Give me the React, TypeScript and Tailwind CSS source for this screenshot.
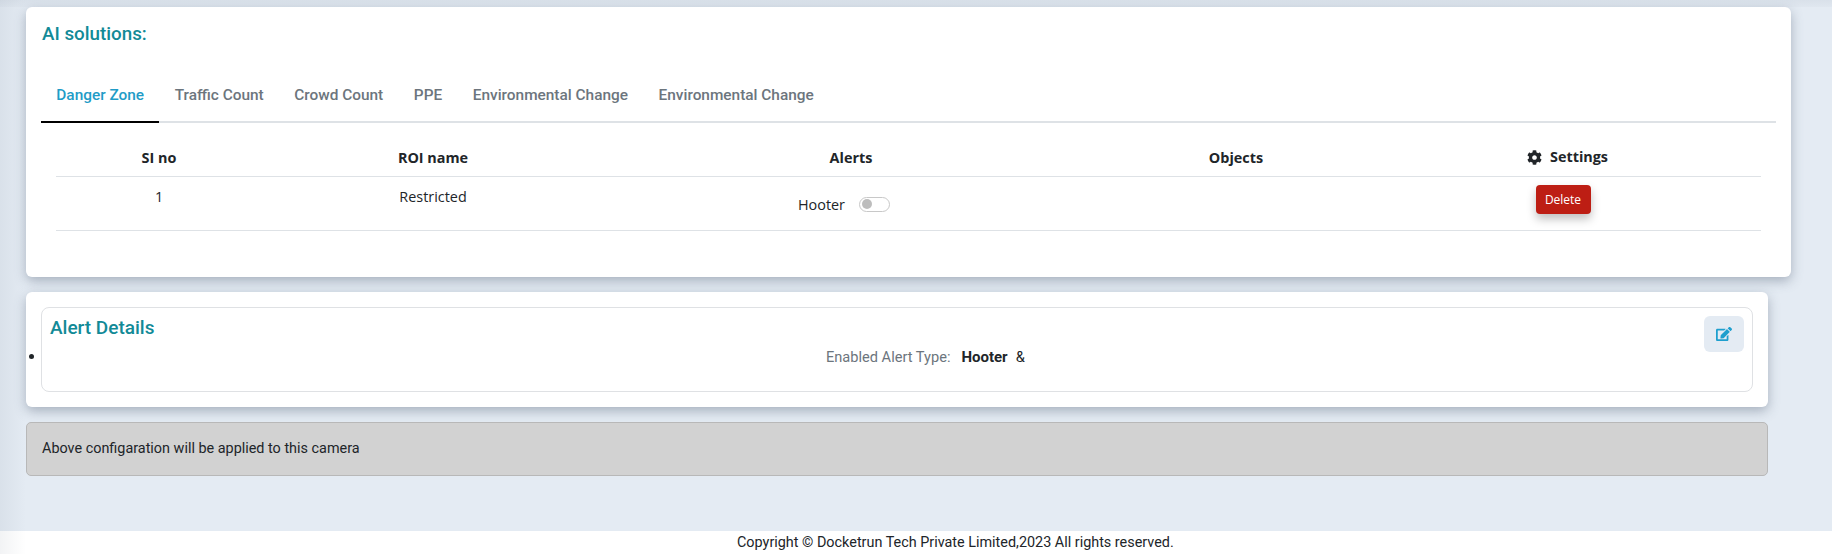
import { FaCog, FaEdit } from 'react-icons/fa';

const TABS = ['Danger Zone', 'Traffic Count', 'Crowd Count', 'PPE', 'Environmental Change', 'Environmental Change'];

const ROBOTO = 'font-[Roboto,sans-serif]';
const BODY = 'font-["Open_Sans",sans-serif]';

export default function App() {
  return (
    <div className={`relative flex h-[554px] w-[1832px] flex-col overflow-hidden bg-[#e4ebf3] ${ROBOTO}`}>
      <main className="relative flex flex-1 flex-col gap-[15px] pl-[26px] pt-[7px]">
        {/* AI solutions */}
        <section className="h-[270px] w-[1765px] rounded-[6px] bg-white px-[15px] shadow-[0_4px_12px_rgba(90,105,125,0.45)]">
          <h2 className="pl-[1px] pt-[17px] text-[18.8px] leading-[21px] font-medium text-[#128a97]">AI solutions:</h2>

          <div className="mt-[22px] flex h-[56px] border-b-2 border-[#dee2e6]">
            {TABS.map((tab, i) => (
              <button
                key={i}
                className={`-mb-[2px] h-[56px] border-b-2 px-[15.3px] pt-[3px] text-[15.4px] font-medium ${
                  i === 0 ? 'border-black text-[#1f9cc7]' : 'border-transparent text-[#6c757d]'
                }`}
              >
                {tab}
              </button>
            ))}
          </div>

          <table className={`ml-[15px] w-[1705px] table-fixed border-collapse text-[14.4px] text-[#212529] ${BODY}`}>
            <thead>
              <tr className="h-[53px] border-b border-[#dee2e6]">
                <th className="w-[206px] pt-[18px] font-bold">SI no</th>
                <th className="w-[342px] pt-[18px] font-bold">ROI name</th>
                <th className="w-[494px] pt-[18px] font-bold">Alerts</th>
                <th className="w-[276px] pt-[18px] font-bold">Objects</th>
                <th className="pt-[18px] font-bold">
                  <span className="inline-flex items-center gap-[8px]">
                    <FaCog className="h-[15px] w-[15px]" />
                    Settings
                  </span>
                </th>
              </tr>
            </thead>
            <tbody>
              <tr className="h-[54px] border-b border-[#dee2e6] align-top">
                <td className="pt-[9px] text-center">1</td>
                <td className="pt-[9px] text-center">Restricted</td>
                <td className="pt-[17px]">
                  <div className="flex items-center justify-center gap-[14px] pr-[14px]">
                    <span>Hooter</span>
                    <span className="flex h-[15px] w-[31px] items-center rounded-full border border-[#c8c8c8] pl-[2px]">
                      <span className="h-[10px] w-[10px] rounded-full bg-[#bdbdbd]" />
                    </span>
                  </div>
                </td>
                <td />
                <td className="pr-[9px] pt-[8px] text-center">
                  <button className="h-[29px] w-[55px] rounded-[4px] bg-[#bd1e14] pt-[2px] text-[12px] text-white shadow-[0_5px_10px_rgba(0,0,0,0.25)]">
                    Delete
                  </button>
                </td>
              </tr>
            </tbody>
          </table>
        </section>

        {/* Alert details */}
        <section className="flex h-[115px] w-[1742px] items-center gap-[7px] rounded-[6px] bg-white pl-[3px] pr-[15px] shadow-[0_4px_12px_rgba(90,105,125,0.45)]">
          <span className="h-[5px] w-[5px] shrink-0 translate-y-[7px] rounded-full bg-[#212529]" />
          <div className="relative h-[85px] flex-1 rounded-[8px] border border-[#dfe1e4] px-[8px]">
            <h3 className="pt-[8px] text-[19px] leading-[23px] font-medium text-[#128a97]">Alert Details</h3>
            <p className="mt-[8px] flex items-center pl-[776px] text-[14.6px] leading-[20px]">
              <span className="text-[#6c757d]">Enabled Alert Type:</span>
              <span className="ml-[11px] text-[15px] font-bold text-[#212529]">Hooter</span>
              <span className="ml-[8px] text-[#212529]">&amp;</span>
            </p>
            <button className="absolute right-[8px] top-[8px] flex h-[36px] w-[40px] items-center justify-center rounded-[6px] bg-[#e4ebf3] text-[#1e9fce]">
              <FaEdit className="h-[16px] w-[16px]" />
            </button>
          </div>
        </section>

        {/* Notice */}
        <div className="flex h-[54px] w-[1742px] items-center rounded-[5px] border border-[#b8b8b8] bg-[#d2d2d2] px-[15px] text-[14.4px] text-[#212529]">
          Above configaration will be applied to this camera
        </div>
      </main>

      <footer className="relative h-[23px] bg-white pl-[737px] text-[14.4px] leading-[23px] text-[#212529]">
        Copyright © Docketrun Tech Private Limited,2023 All rights reserved.
      </footer>

      {/* shadows cast by the sidebar and the top bar */}
      <div className="pointer-events-none absolute inset-y-0 left-0 w-[26px] bg-linear-to-r from-[rgba(90,105,125,0.08)] to-transparent" />
      <div className="pointer-events-none absolute inset-x-0 top-0 h-[7px] bg-linear-to-b from-[rgba(90,105,125,0.08)] to-[rgba(90,105,125,0.03)]" />
    </div>
  );
}
